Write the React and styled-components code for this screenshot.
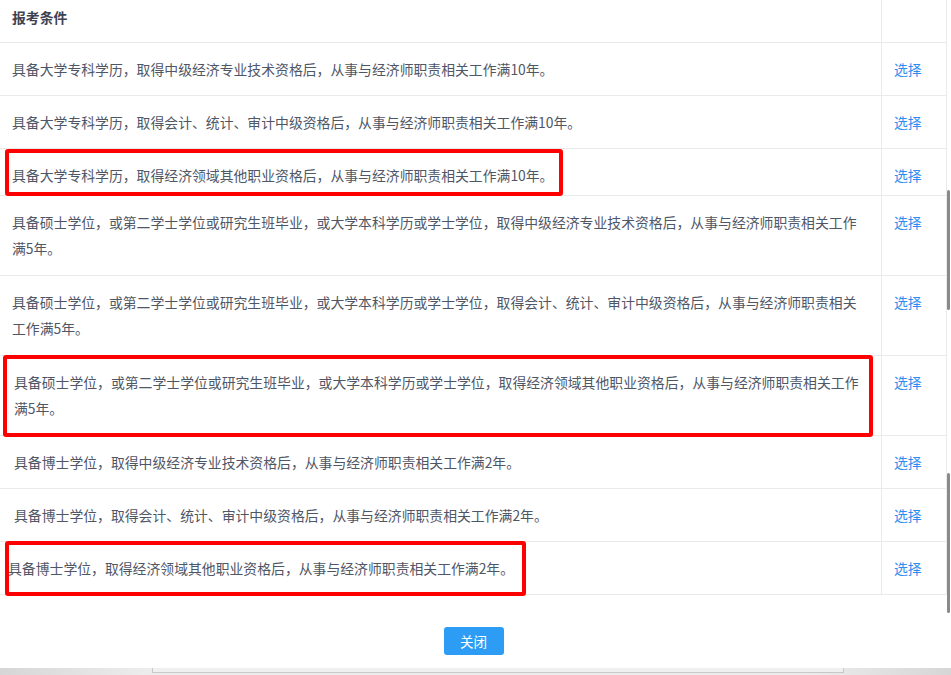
import React from 'react';
import styled, { createGlobalStyle } from 'styled-components';

const GlobalStyle = createGlobalStyle`
  html, body {
    margin: 0;
    padding: 0;
    background: #ffffff;
  }
  body {
    font-family: "Noto Sans CJK SC", "Noto Sans", "Liberation Sans", sans-serif;
    color: #515a6e;
  }
`;

const Page = styled.div`
  display: flex;
  width: 951px;
  height: 675px;
  overflow: hidden;
  flex-direction: column;
`;

const Body = styled.div`
  display: flex;
  flex: 1;
`;

const Main = styled.div`
  width: 947px;
  display: flex;
  flex-direction: column;
`;

const Table = styled.div`
  display: flex;
  flex-direction: column;
  border-right: 1px solid #e8eaec;
`;

const Row = styled.div`
  position: relative;
  display: flex;
  border-bottom: 1px solid #e8eaec;
`;

const bottomPad = (p) => (p.$head ? 12 : p.$trim ? 7 : p.$tall ? 14 : 13);

const TextCell = styled.div`
  width: 882px;
  box-sizing: border-box;
  padding: ${(p) => (p.$head ? 4 : 13)}px 20px ${bottomPad}px ${(p) => p.$indent}px;
  font-size: 13.85px;
  line-height: 26px;
  font-weight: ${(p) => (p.$head ? 700 : 400)};
  color: ${(p) => (p.$head ? '#3d4351' : '#4f5666')};
  border-right: 1px solid #e8eaec;
`;

const ActionCell = styled.div`
  flex: 1;
  padding: 13px 0 ${bottomPad}px 12px;
  font-size: 13.85px;
  line-height: 26px;
`;

const SelectLink = styled.a`
  color: #2d8cf0;
  cursor: pointer;
  text-decoration: none;
`;

const Highlight = styled.div`
  position: absolute;
  left: ${(p) => p.$left}px;
  top: ${(p) => p.$top}px;
  width: ${(p) => p.$width}px;
  height: ${(p) => p.$height}px;
  box-sizing: border-box;
  border: 4px solid #ff0000;
  border-radius: 3px;
  pointer-events: none;
`;

const Footer = styled.div`
  flex: 1;
  display: flex;
  justify-content: center;
  align-items: flex-start;
  padding-top: 32px;
`;

const CloseButton = styled.button`
  width: 60px;
  height: 28px;
  border: none;
  border-radius: 3px;
  background: #2d9cf4;
  color: #ffffff;
  font-family: inherit;
  font-size: 13.5px;
  cursor: pointer;
`;

const Scrollbar = styled.div`
  width: 4px;
  display: flex;
  flex-direction: column;
`;

const Thumb = styled.div`
  margin-top: ${(p) => p.$gap}px;
  height: ${(p) => p.$size}px;
  width: 3px;
  background: #8a8a8a;
  border-radius: 2px;
`;

const BottomShade = styled.div`
  height: 7px;
  background: linear-gradient(90deg, #d6d6d6, #ececec 15%, #ececec 85%, #d6d6d6);
  display: flex;
`;

const ShadePanel = styled.div`
  margin-left: 152px;
  width: 690px;
  height: 4px;
  background: #f0f0f0;
  border: 1px solid #c8c8c8;
  border-top: none;
`;

const rows = [
  { text: '具备大学专科学历，取得中级经济专业技术资格后，从事与经济师职责相关工作满10年。', indent: 12 },
  { text: '具备大学专科学历，取得会计、统计、审计中级资格后，从事与经济师职责相关工作满10年。', indent: 12 },
  {
    text: '具备大学专科学历，取得经济领域其他职业资格后，从事与经济师职责相关工作满10年。',
    indent: 12,
    trim: true,
    mark: { left: 5, top: 0, width: 558, height: 47 },
  },
  { text: '具备硕士学位，或第二学士学位或研究生班毕业，或大学本科学历或学士学位，取得中级经济专业技术资格后，从事与经济师职责相关工作满5年。', indent: 12, tall: true },
  { text: '具备硕士学位，或第二学士学位或研究生班毕业，或大学本科学历或学士学位，取得会计、统计、审计中级资格后，从事与经济师职责相关工作满5年。', indent: 12, tall: true },
  {
    text: '具备硕士学位，或第二学士学位或研究生班毕业，或大学本科学历或学士学位，取得经济领域其他职业资格后，从事与经济师职责相关工作满5年。',
    indent: 14,
    tall: true,
    mark: { left: 3, top: -1, width: 870, height: 82 },
  },
  { text: '具备博士学位，取得中级经济专业技术资格后，从事与经济师职责相关工作满2年。', indent: 14 },
  { text: '具备博士学位，取得会计、统计、审计中级资格后，从事与经济师职责相关工作满2年。', indent: 14 },
  {
    text: '具备博士学位，取得经济领域其他职业资格后，从事与经济师职责相关工作满2年。',
    indent: 8,
    mark: { left: 5, top: -1, width: 521, height: 55 },
  },
];

function App() {
  return (
    <>
      <GlobalStyle />
      <Page>
        <Body>
          <Main>
            <Table>
              <Row>
                <TextCell $head $indent={12}>报考条件</TextCell>
                <ActionCell $head />
              </Row>
              {rows.map((r, i) => (
                <Row key={i}>
                  <TextCell $indent={r.indent} $trim={r.trim} $tall={r.tall}>{r.text}</TextCell>
                  <ActionCell $trim={r.trim} $tall={r.tall}>
                    <SelectLink>选择</SelectLink>
                  </ActionCell>
                  {r.mark && (
                    <Highlight
                      $left={r.mark.left}
                      $top={r.mark.top}
                      $width={r.mark.width}
                      $height={r.mark.height}
                    />
                  )}
                </Row>
              ))}
            </Table>
            <Footer>
              <CloseButton>关闭</CloseButton>
            </Footer>
          </Main>
          <Scrollbar>
            <Thumb $gap={190} $size={120} />
            <Thumb $gap={163} $size={140} />
          </Scrollbar>
        </Body>
        <BottomShade>
          <ShadePanel />
        </BottomShade>
      </Page>
    </>
  );
}

export default App;
